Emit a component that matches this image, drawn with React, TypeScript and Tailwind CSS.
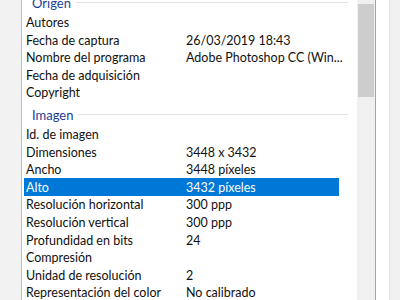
import React from "react";

type Row = { label: string; value?: string; selected?: boolean };

const origen: Row[] = [
  { label: "Autores" },
  { label: "Fecha de captura", value: "26/03/2019 18:43" },
  { label: "Nombre del programa", value: "Adobe Photoshop CC (Win..." },
  { label: "Fecha de adquisición" },
  { label: "Copyright" },
];

const imagen: Row[] = [
  { label: "Id. de imagen" },
  { label: "Dimensiones", value: "3448 x 3432" },
  { label: "Ancho", value: "3448 píxeles" },
  { label: "Alto", value: "3432 píxeles", selected: true },
  { label: "Resolución horizontal", value: "300 ppp" },
  { label: "Resolución vertical", value: "300 ppp" },
  { label: "Profundidad en bits", value: "24" },
  { label: "Compresión" },
  { label: "Unidad de resolución", value: "2" },
  { label: "Representación del color", value: "No calibrado" },
];

function GroupHeader({ title }: { title: string }) {
  return (
    <div className="flex h-[24px] items-start pl-[10px] pr-[9px]">
      <span className="mt-[6px] text-[13px] leading-[16px] text-[#1e3c96]">{title}</span>
      <div className="ml-[5px] mt-[13px] h-px flex-1 bg-[#e3e3e3]" />
    </div>
  );
}

function PropRow({ row }: { row: Row }) {
  return (
    <div
      className={`ml-[2px] mr-[18px] flex h-[17.6px] items-center pl-[2px] pt-[2px] text-[12.5px] leading-[16px] ${
        row.selected ? "bg-[#0078d7] text-white" : "text-[#111111]"
      }`}
    >
      <span className="w-[160px] shrink-0 whitespace-nowrap">{row.label}</span>
      {row.value && <span className="whitespace-nowrap">{row.value}</span>}
    </div>
  );
}

export default function App() {
  return (
    <div className="flex h-[300px] w-[400px] overflow-hidden bg-[#f0f0f0] font-['Lato',sans-serif]">
      <div className="w-[21px] shrink-0 bg-[#f2f2f2]" />
      <div className="flex w-[355px] shrink-0 border-l border-r border-l-[#bcbcbc] border-r-[#a3a3a3] bg-white">
        <div className="flex-1 overflow-hidden">
          <div className="-mt-[10.8px]">
            <GroupHeader title="Origen" />
            {origen.map((r) => (
              <PropRow key={r.label} row={r} />
            ))}
            <GroupHeader title="Imagen" />
            {imagen.map((r) => (
              <PropRow key={r.label} row={r} />
            ))}
          </div>
        </div>
        <div className="w-[18px] shrink-0 bg-[#f0f0f0] pl-px pr-px pt-[4px]">
          <div className="h-[93px] bg-[#cdcdcd]" />
        </div>
      </div>
      <div className="w-[14px] shrink-0 border-r border-[#e3e3e3] bg-white" />
      <div className="flex-1 bg-[#f0f0f0]" />
    </div>
  );
}
